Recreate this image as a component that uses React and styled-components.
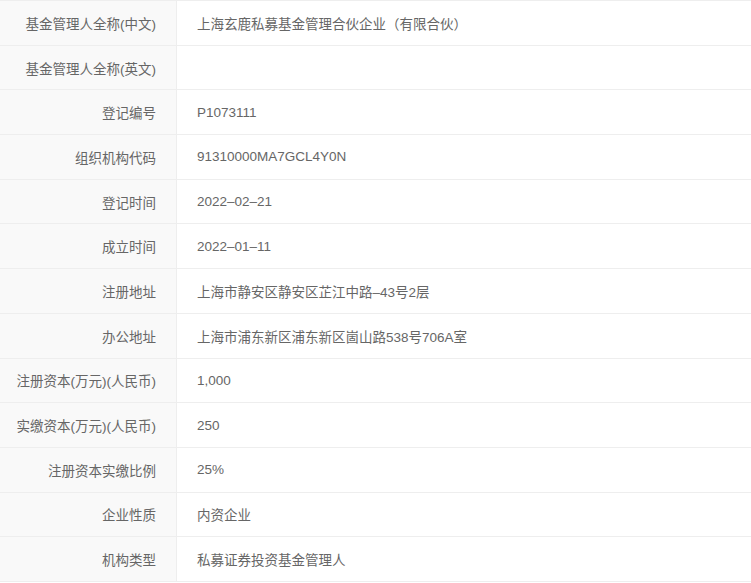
import React from 'react';
import styled, { createGlobalStyle } from 'styled-components';

const rows = [
    ['基金管理人全称(中文)', '上海玄鹿私募基金管理合伙企业（有限合伙）'],
    ['基金管理人全称(英文)', ''],
    ['登记编号', 'P1073111'],
    ['组织机构代码', '91310000MA7GCL4Y0N'],
    ['登记时间', '2022–02–21'],
    ['成立时间', '2022–01–11'],
    ['注册地址', '上海市静安区静安区芷江中路–43号2层'],
    ['办公地址', '上海市浦东新区浦东新区崮山路538号706A室'],
    ['注册资本(万元)(人民币)', '1,000'],
    ['实缴资本(万元)(人民币)', '250'],
    ['注册资本实缴比例', '25%'],
    ['企业性质', '内资企业'],
    ['机构类型', '私募证券投资基金管理人'],
];

const GlobalStyle = createGlobalStyle`
    html, body {
        margin: 0;
        padding: 0;
        background: #FFFFFF;
    }
`;

const Table = styled.div`
    width: 751px;
    border-bottom: 1px solid #EEEEEE;
    font-family: 'Liberation Sans', 'Noto Sans CJK SC', sans-serif;
    font-size: 13.5px;
    color: #666666;
`;

const Row = styled.div`
    box-sizing: border-box;
    display: grid;
    grid-template-columns: 177px 1fr;
    height: 44.7px;
    border-top: 1px solid #EEEEEE;
`;

const Label = styled.div`
    display: flex;
    align-items: center;
    justify-content: flex-end;
    padding-right: 20px;
    background: #F9F9F9;
    border-right: 1px solid #EEEEEE;
    white-space: nowrap;
`;

const Value = styled.div`
    display: flex;
    align-items: center;
    padding-left: 20px;
    white-space: nowrap;
`;

const App = () => {
    return (
        <>
            <GlobalStyle />
            <Table>
                {rows.map(([label, value]) => (
                    <Row key={label}>
                        <Label>{label}</Label>
                        <Value>{value}</Value>
                    </Row>
                ))}
            </Table>
        </>
    );
};

export default App;
